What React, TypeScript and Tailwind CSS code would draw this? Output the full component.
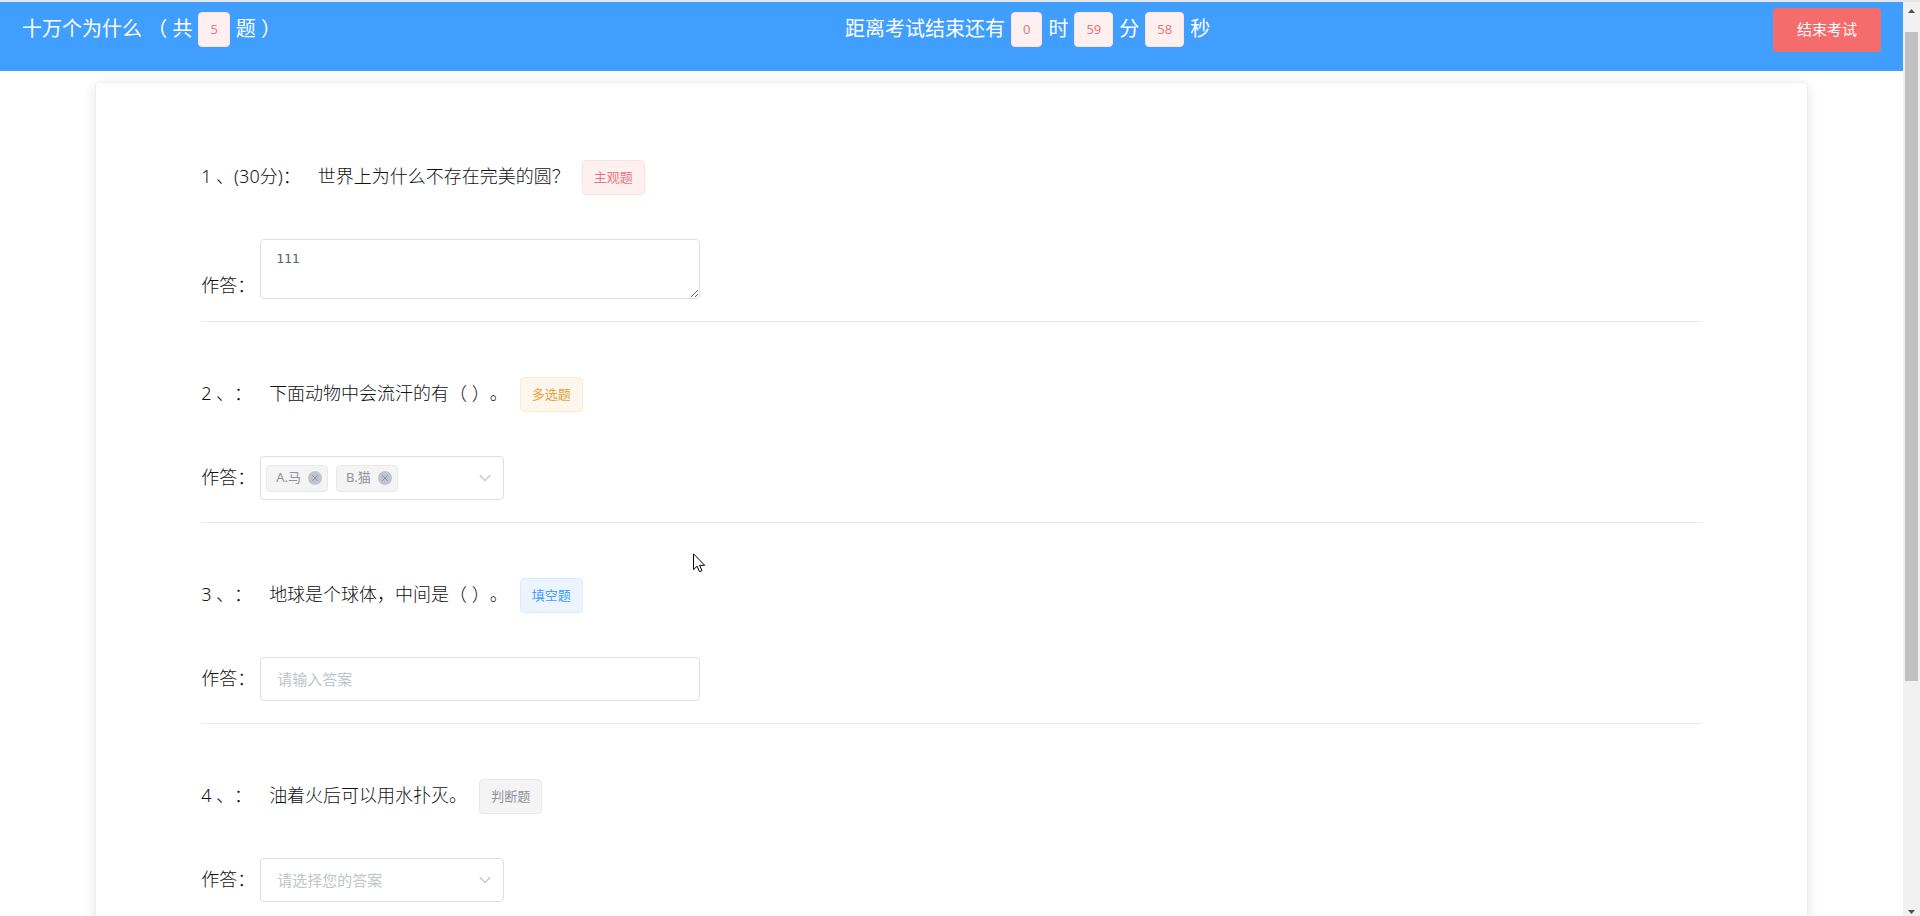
import React, { useState } from "react";

type Tone = "danger" | "warning" | "primary" | "info";

const TONES: Record<Tone, string> = {
  danger: "border-[#fde2e2] bg-[#fef0f0] text-[#e8787a]",
  warning: "border-[#faecd8] bg-[#fdf6ec] text-[#e6a23c]",
  primary: "border-[#d9ecff] bg-[#ecf5ff] text-[#409eff]",
  info: "border-[#e9e9eb] bg-[#f4f4f5] text-[#909399]",
};

function Tag({ tone, children }: { tone: Tone; children: React.ReactNode }) {
  return (
    <span
      className={`inline-flex h-[35px] shrink-0 items-center rounded border px-[11px] text-[13px] ${TONES[tone]}`}
    >
      {children}
    </span>
  );
}

function Chevron() {
  return (
    <svg
      className="pointer-events-none h-[12px] w-[12px] shrink-0"
      viewBox="0 0 12 12"
      fill="none"
      stroke="#c0c4cc"
      strokeWidth="1.3"
      aria-hidden="true"
    >
      <path d="M0.8 3.2 6 8.6 11.2 3.2" />
    </svg>
  );
}

function Question(props: {
  id: string;
  label: string;
  title: string;
  tone: Tone;
  kind: string;
  alignEnd?: boolean;
  children: React.ReactNode;
}) {
  return (
    <section className="border-b border-[#ebebeb] pb-[22px]">
      <div className="flex items-start">
        <h2 className="flex gap-[17px] whitespace-pre text-lg/8 font-light text-[#111214]">
          <span>{props.label}</span>
          <span>{props.title}</span>
        </h2>
        <span className="ml-[12px] flex">
          <Tag tone={props.tone}>{props.kind}</Tag>
        </span>
      </div>
      <div className={`mt-11 flex ${props.alignEnd ? "items-end" : "items-center"}`}>
        <label htmlFor={props.id} className="w-[59px] shrink-0 pb-[2px] text-lg/6 font-light text-[#111214]">
          作答：
        </label>
        {props.children}
      </div>
    </section>
  );
}

function Scrollbar() {
  return (
    <div className="flex w-[17px] shrink-0 flex-col items-center bg-[#f1f1f1]" aria-hidden="true">
      <svg className="h-[17px] w-[17px] shrink-0" viewBox="0 0 17 17">
        <path d="M5 11 8.5 7 12 11Z" fill="#505050" />
      </svg>
      <div className="basis-[13px]" />
      <div className="w-[13px] grow-[649] bg-[#c1c1c1]" />
      <div className="grow-[226]" />
      <svg className="h-[9px] w-[17px] shrink-0" viewBox="0 0 17 9">
        <path d="M5 3 8.5 7 12 3Z" fill="#505050" />
      </svg>
    </div>
  );
}

export default function App() {
  const [essay, setEssay] = useState("111");
  const [picked, setPicked] = useState(["A.马", "B.猫"]);
  const [blank, setBlank] = useState("");
  const [judge, setJudge] = useState("");

  return (
    <div className="flex h-screen overflow-hidden border-t-2 border-[#e4e6ea] bg-white font-['Noto_Sans','Noto_Sans_CJK_SC',sans-serif] text-[#303133] [text-spacing-trim:space-all]">
      <div className="min-w-0 flex-1 overflow-y-auto [scrollbar-width:none]">
        <header className="grid h-[69px] grid-cols-[823fr_928fr_auto] items-start bg-[#409eff] px-[22px] text-xl/9 text-white">
          <h1 className="flex items-center gap-[6px] whitespace-pre pt-[9px]">
            <span>十万个为什么 （ 共</span>
            <Tag tone="danger">5</Tag>
            <span>题 ）</span>
          </h1>
          <p className="flex items-center gap-[6px] whitespace-nowrap pt-[9px]">
            <span>距离考试结束还有</span>
            <Tag tone="danger">0</Tag>
            <span>时</span>
            <Tag tone="danger">59</Tag>
            <span>分</span>
            <Tag tone="danger">58</Tag>
            <span>秒</span>
          </p>
          <button
            type="button"
            className="mt-[6px] h-11 rounded bg-[#f56c6c] px-6 pb-[2px] text-[15px] text-white"
          >
            结束考试
          </button>
        </header>

        <main className="mx-auto mt-[11px] w-[90%] rounded border border-[#ebeef5] bg-white px-[105px] pt-[77px] shadow-[0_2px_13px_rgba(0,0,0,0.1)]">
          <div className="flex flex-col gap-[55px]">
            <Question
              id="q1"
              label="1 、(30分)："
              title="世界上为什么不存在完美的圆？"
              tone="danger"
              kind="主观题"
              alignEnd
            >
              <textarea
                id="q1"
                value={essay}
                onChange={(e) => setEssay(e.target.value)}
                className="block h-[60px] w-[440px] resize rounded border border-[#dcdfe6] px-[15px] py-[7px] font-['DejaVu_Sans_Mono',monospace] text-[13px]/6 text-[#606266] outline-none"
              />
            </Question>

            <Question
              id="q2"
              label="2 、："
              title="下面动物中会流汗的有（ ）。"
              tone="warning"
              kind="多选题"
            >
              <div className="flex h-11 w-[244px] items-center gap-2 rounded border border-[#dcdfe6] pl-[5px] pr-3">
                {picked.map((p) => (
                  <span
                    key={p}
                    className="flex h-[27px] items-center gap-[7px] rounded border border-[#e9e9eb] bg-[#f4f4f5] pl-[9px] pr-[5px] text-[13px] text-[#909399]"
                  >
                    {p}
                    <button
                      type="button"
                      aria-label={`移除 ${p}`}
                      onClick={() => setPicked(picked.filter((x) => x !== p))}
                    >
                      <svg className="h-[14px] w-[14px]" viewBox="0 0 14 14" aria-hidden="true">
                        <circle cx="7" cy="7" r="7" fill="#c0c4cc" />
                        <path d="M4.2 4.2 9.8 9.8M9.8 4.2 4.2 9.8" stroke="#909399" strokeWidth="1" />
                      </svg>
                    </button>
                  </span>
                ))}
                <input id="q2" readOnly className="min-w-0 flex-1 outline-none" />
                <Chevron />
              </div>
            </Question>

            <Question
              id="q3"
              label="3 、："
              title="地球是个球体，中间是（ ）。"
              tone="primary"
              kind="填空题"
            >
              <input
                id="q3"
                value={blank}
                onChange={(e) => setBlank(e.target.value)}
                placeholder="请输入答案"
                className="h-11 w-[440px] rounded border border-[#dcdfe6] px-4 text-[15px] text-[#606266] outline-none placeholder:text-[#c0c4cc]"
              />
            </Question>

            <Question
              id="q4"
              label="4 、："
              title="油着火后可以用水扑灭。"
              tone="info"
              kind="判断题"
            >
              <div className="flex h-11 w-[244px] items-center rounded border border-[#dcdfe6] pr-3">
                <select
                  id="q4"
                  value={judge}
                  onChange={(e) => setJudge(e.target.value)}
                  className="h-full min-w-0 flex-1 appearance-none bg-transparent pl-4 text-[15px] text-[#c0c4cc] outline-none"
                >
                  <option value="">请选择您的答案</option>
                </select>
                <Chevron />
              </div>
            </Question>
          </div>
        </main>
      </div>
      <Scrollbar />
      <svg
        className="pointer-events-none absolute left-[693px] top-[553px] h-[20px] w-[13px]"
        viewBox="0 0 13 20"
        aria-hidden="true"
      >
        <path
          d="M0.5 0.8V16.6L4.1 13.2 6.5 18.7 9 17.6 6.6 12.3H11.7Z"
          fill="#fff"
          stroke="#000"
          strokeWidth="1"
        />
      </svg>
    </div>
  );
}
